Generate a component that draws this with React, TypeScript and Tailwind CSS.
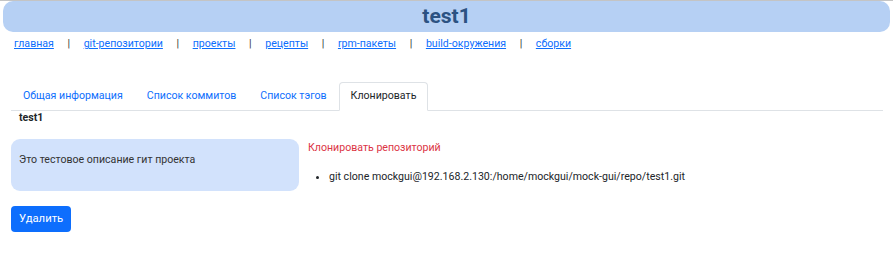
const NAV = ["главная", "git-репозитории", "проекты", "рецепты", "rpm-пакеты", "build-окружения", "сборки"];
const TABS = ["Общая информация", "Список коммитов", "Список тэгов"];

export default function App() {
  return (
    <div className="min-h-[253px] bg-white border-t border-[#c4c4c4] text-[#212529]" style={{ fontFamily: "Roboto, 'Noto Sans', sans-serif" }}>
      <div className="mx-[3px] h-[31px] rounded-[10px] bg-[#b6d0f4] flex items-center justify-center">
        <h1 className="text-[21px] font-bold text-[#2c5282] leading-none">test1</h1>
      </div>

      <div className="flex items-center px-[14px] pt-[4px] text-[10.6px]">
        {NAV.map((n, i) => (
          <div key={n} className="flex items-center">
            <a href="#" className="text-[#0d6efd] underline">{n}</a>
            {i < NAV.length - 1 && <span className="px-[13.6px] text-[#333]">|</span>}
          </div>
        ))}
      </div>

      <div className="mt-[30px] mx-[11px] mr-[10px] flex border-b border-[#dee2e6] text-[10.6px]">
        {TABS.map((t) => (
          <a key={t} href="#" className="px-[11px] h-[28px] flex items-center text-[#0d6efd] mb-[-1px] border border-transparent">
            {t}
          </a>
        ))}
        <span className="px-[11px] h-[29px] flex items-center mb-[-1px] bg-white border border-[#dee2e6] border-b-white rounded-t-[4px] text-[#212529]">
          Клонировать
        </span>
      </div>

      <div className="px-[19px] pt-[1px] text-[10.6px] font-bold leading-[12px]">test1</div>

      <div className="flex gap-[9px] px-[11px] mt-[15px]">
        <div className="w-[288px] h-[52px] rounded-[9px] bg-[#d2e2fc] px-[8px] pt-[13px] text-[10.6px] text-[#333]">
          Это тестовое описание гит проекта
        </div>
        <div className="text-[10.6px]">
          <div className="text-[#dc3545] mt-[1px]">Клонировать репозиторий</div>
          <ul className="list-disc pl-[21px] mt-[13px]">
            <li>git clone mockgui@192.168.2.130:/home/mockgui/mock-gui/repo/test1.git</li>
          </ul>
        </div>
      </div>

      <div className="px-[11px] mt-[14px]">
        <button className="h-[26px] px-[8px] rounded-[4px] bg-[#0d6efd] text-white text-[11.3px]">Удалить</button>
      </div>
    </div>
  );
}
